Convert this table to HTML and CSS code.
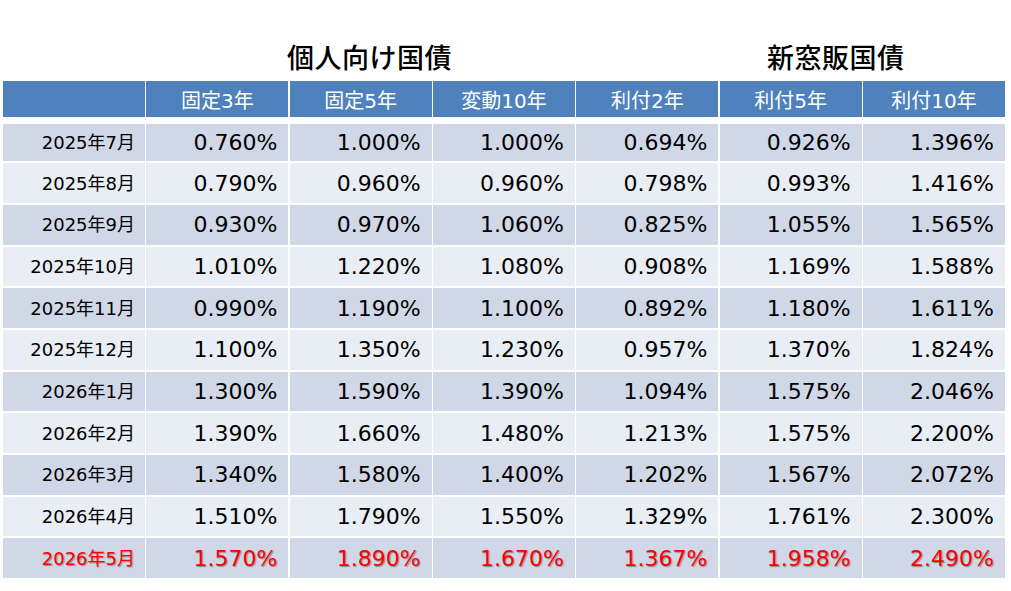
FILE: index.html
```html
<!DOCTYPE html>
<html lang="ja">
<head>
<meta charset="utf-8">
<link rel="stylesheet" href="styles.css">
</head>
<body>
<div class="page">
  <div class="titles">
    <div class="title t1">個人向け国債</div>
    <div class="title t2">新窓販国債</div>
  </div>
  <div class="grid">
    <div class="hd"></div><div class="hd">固定3年</div><div class="hd">固定5年</div><div class="hd">変動10年</div><div class="hd">利付2年</div><div class="hd">利付5年</div><div class="hd">利付10年</div>

    <div class="c d odd">2025年7月</div><div class="c odd">0.760%</div><div class="c odd">1.000%</div><div class="c odd">1.000%</div><div class="c odd">0.694%</div><div class="c odd">0.926%</div><div class="c odd">1.396%</div>
    <div class="c d even">2025年8月</div><div class="c even">0.790%</div><div class="c even">0.960%</div><div class="c even">0.960%</div><div class="c even">0.798%</div><div class="c even">0.993%</div><div class="c even">1.416%</div>
    <div class="c d odd">2025年9月</div><div class="c odd">0.930%</div><div class="c odd">0.970%</div><div class="c odd">1.060%</div><div class="c odd">0.825%</div><div class="c odd">1.055%</div><div class="c odd">1.565%</div>
    <div class="c d even">2025年10月</div><div class="c even">1.010%</div><div class="c even">1.220%</div><div class="c even">1.080%</div><div class="c even">0.908%</div><div class="c even">1.169%</div><div class="c even">1.588%</div>
    <div class="c d odd">2025年11月</div><div class="c odd">0.990%</div><div class="c odd">1.190%</div><div class="c odd">1.100%</div><div class="c odd">0.892%</div><div class="c odd">1.180%</div><div class="c odd">1.611%</div>
    <div class="c d even">2025年12月</div><div class="c even">1.100%</div><div class="c even">1.350%</div><div class="c even">1.230%</div><div class="c even">0.957%</div><div class="c even">1.370%</div><div class="c even">1.824%</div>
    <div class="c d odd">2026年1月</div><div class="c odd">1.300%</div><div class="c odd">1.590%</div><div class="c odd">1.390%</div><div class="c odd">1.094%</div><div class="c odd">1.575%</div><div class="c odd">2.046%</div>
    <div class="c d even">2026年2月</div><div class="c even">1.390%</div><div class="c even">1.660%</div><div class="c even">1.480%</div><div class="c even">1.213%</div><div class="c even">1.575%</div><div class="c even">2.200%</div>
    <div class="c d odd">2026年3月</div><div class="c odd">1.340%</div><div class="c odd">1.580%</div><div class="c odd">1.400%</div><div class="c odd">1.202%</div><div class="c odd">1.567%</div><div class="c odd">2.072%</div>
    <div class="c d even">2026年4月</div><div class="c even">1.510%</div><div class="c even">1.790%</div><div class="c even">1.550%</div><div class="c even">1.329%</div><div class="c even">1.761%</div><div class="c even">2.300%</div>
    <div class="c d odd hl">2026年5月</div><div class="c odd hl">1.570%</div><div class="c odd hl">1.890%</div><div class="c odd hl">1.670%</div><div class="c odd hl">1.367%</div><div class="c odd hl">1.958%</div><div class="c odd hl">2.490%</div>
  </div>
</div>
</body>
</html>
```

FILE: styles.css
```css
* { box-sizing: border-box; }
html, body { margin: 0; padding: 0; background: #fff; }
body { font-family: "DejaVu Sans", "Noto Sans CJK JP", sans-serif; color: #000; }
.page { width: 1011px; height: 591px; padding: 0 5px 0 3px; }
.titles { height: 81px; position: relative; }
.title { position: absolute; top: 37px; font-family: "Noto Sans CJK JP", sans-serif; font-size: 27px; font-weight: 500; line-height: 40px; letter-spacing: 0.5px; }
.t1 { left: 284px; }
.t2 { left: 764px; }
.grid {
  display: grid;
  grid-template-columns: repeat(7, 142px);
  grid-template-rows: 38.5px repeat(11, 39.7px);
  column-gap: 1.33px;
  row-gap: 2px;
}
.hd {
  background: #4F81BD; color: #fff; font-size: 20px;
  display: flex; align-items: center; justify-content: center;
  margin-bottom: 2.5px;
}
.c {
  display: flex; align-items: center; justify-content: flex-end;
  padding-right: 11px; font-size: 22px; letter-spacing: 0;
}
.grid > .c:nth-child(-n+14) { margin-top: 2.5px; }
.d { font-size: 18px; padding-right: 10px; padding-bottom: 3px; }
.odd { background: #D0D8E8; }
.even { background: #E9EDF4; }
.hl { color: #FF0000; text-shadow: 1px 1px 1px rgba(0,0,0,0.35); }
```
